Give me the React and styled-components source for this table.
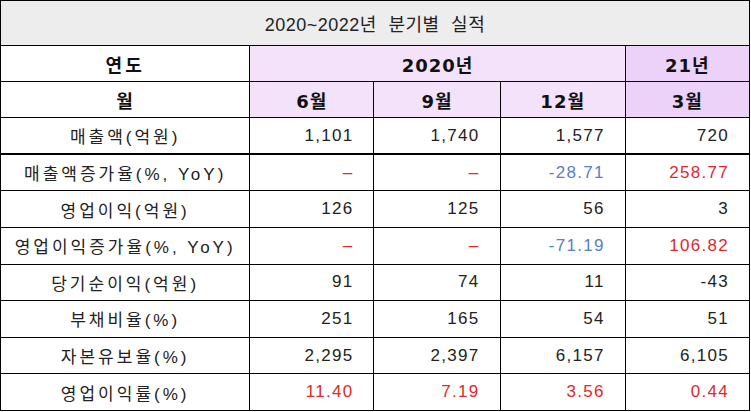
import React from "react";
import styled, { createGlobalStyle } from "styled-components";

const GlobalStyle = createGlobalStyle`
  html, body {
    margin: 0;
    padding: 0;
    background: #ffffff;
  }
  body {
    font-family: "Liberation Sans", "Noto Sans CJK KR", sans-serif;
    color: #222222;
  }
`;

const Table = styled.table`
  width: 750px;
  height: 411px;
  border-collapse: collapse;
  table-layout: fixed;
  border: 1px solid #000;
`;

const TitleCell = styled.th`
  height: 44px;
  padding: 0;
  background: #ededed;
  font-weight: normal;
  font-size: 18px;
  letter-spacing: 0.5px;
  word-spacing: 6px;
  color: #222;
  border: 1px solid #000;
  text-align: center;
`;

const HeadCell = styled.th`
  height: 35px;
  padding: 0;
  font-family: "DejaVu Sans", "Noto Sans CJK KR", sans-serif;
  font-size: 18px;
  font-weight: bold;
  color: #111;
  text-align: center;
  letter-spacing: ${(p) => (p.$spaced ? "3px" : "1px")};
  background: ${(p) =>
    p.$tone === "dark" ? "#ecd2f9" : p.$tone === "light" ? "#f4e2fb" : "#ffffff"};
  border: 1px solid #000;
`;

const Row = styled.tr`
  height: 36px;
  border-bottom: ${(p) => (p.$thick ? "2px" : "1px")} solid #000;
`;

const Label = styled.td`
  padding: 0;
  text-align: center;
  font-size: 17px;
  letter-spacing: 3px;
  color: #222;
  border-left: 1px solid #000;
  border-right: 1px solid #000;
`;

const Value = styled.td`
  padding: 0 20px 0 0;
  text-align: right;
  font-size: 17px;
  letter-spacing: 1.3px;
  border-right: 1px solid #000;
  color: ${(p) =>
    p.$color === "red" ? "#e0282c" : p.$color === "blue" ? "#5a7ec2" : "#222"};
`;

const rows = [
  { label: "매출액(억원)", values: ["1,101", "1,740", "1,577", "720"], thick: true },
  {
    label: "매출액증가율(%, YoY)",
    values: ["–", "–", "-28.71", "258.77"],
    colors: ["red", "red", "blue", "red"],
  },
  { label: "영업이익(억원)", values: ["126", "125", "56", "3"] },
  {
    label: "영업이익증가율(%, YoY)",
    values: ["–", "–", "-71.19", "106.82"],
    colors: ["red", "red", "blue", "red"],
  },
  { label: "당기순이익(억원)", values: ["91", "74", "11", "-43"] },
  { label: "부채비율(%)", values: ["251", "165", "54", "51"] },
  { label: "자본유보율(%)", values: ["2,295", "2,397", "6,157", "6,105"] },
  {
    label: "영업이익률(%)",
    values: ["11.40", "7.19", "3.56", "0.44"],
    colors: ["red", "red", "red", "red"],
  },
];

export default function App() {
  return (
    <>
      <GlobalStyle />
      <Table>
        <colgroup>
          <col style={{ width: 249 }} />
          <col style={{ width: 124 }} />
          <col style={{ width: 126 }} />
          <col style={{ width: 125 }} />
          <col style={{ width: 124 }} />
        </colgroup>
        <thead>
          <tr>
            <TitleCell colSpan={5}>2020~2022년 분기별 실적</TitleCell>
          </tr>
          <tr>
            <HeadCell $spaced>연도</HeadCell>
            <HeadCell colSpan={3} $tone="light">2020년</HeadCell>
            <HeadCell $tone="dark">21년</HeadCell>
          </tr>
          <tr>
            <HeadCell>월</HeadCell>
            <HeadCell $tone="light">6월</HeadCell>
            <HeadCell $tone="light">9월</HeadCell>
            <HeadCell $tone="light">12월</HeadCell>
            <HeadCell $tone="dark">3월</HeadCell>
          </tr>
        </thead>
        <tbody>
          {rows.map((r) => (
            <Row key={r.label} $thick={r.thick}>
              <Label>{r.label}</Label>
              {r.values.map((v, i) => (
                <Value key={i} $color={r.colors ? r.colors[i] : null}>
                  {v}
                </Value>
              ))}
            </Row>
          ))}
        </tbody>
      </Table>
    </>
  );
}
